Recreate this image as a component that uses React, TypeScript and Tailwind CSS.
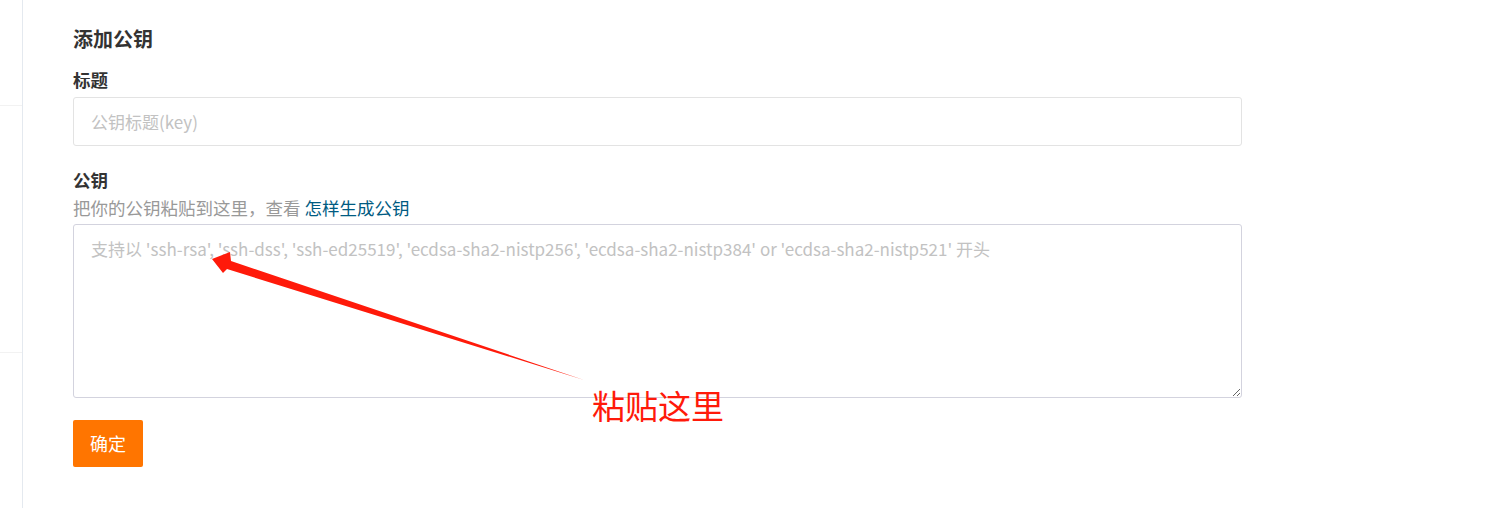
const FONT = "font-['Microsoft_YaHei','Noto_Sans_CJK_SC','Liberation_Sans',sans-serif]";

function Arrow() {
  return (
    <svg
      className="pointer-events-none absolute left-0 top-0"
      width="1502"
      height="508"
      viewBox="0 0 1502 508"
    >
      <polygon
        points="212,259 230,252 231,261 584,380 227,269 223,273"
        fill="#ff1a0a"
      />
    </svg>
  );
}

export default function App() {
  return (
    <div className={`relative flex h-[508px] w-[1502px] bg-white ${FONT}`}>
      <aside className="flex w-[23px] shrink-0 flex-col border-r border-[#e4e9ef]">
        <div className="h-[106px] border-b border-[#f2f2f2]" />
        <div className="h-[247px] border-b border-[#f2f2f2]" />
      </aside>

      <main className="flex flex-1 flex-col pl-[50px] pt-[25px] text-[#333]">
        <h2 className="text-[20px] font-bold leading-[28px]">添加公钥</h2>

        <label className="mt-[15px] text-[17.5px] font-bold leading-[24px]">标题</label>
        <input
          className="mt-[5px] h-[49px] w-[1169px] rounded-[3px] border border-[#e3e3e3] px-[17px] text-[17px] outline-none placeholder:text-[#c2c2c2]"
          placeholder="公钥标题(key)"
        />

        <label className="mt-[22px] text-[17.5px] font-bold leading-[24px]">公钥</label>
        <p className="mt-[4px] text-[17.5px] leading-[24px] text-[#999]">
          把你的公钥粘贴到这里，查看 <a className="text-[#005b82]">怎样生成公钥</a>
        </p>
        <textarea
          className="mt-[4px] h-[174px] w-[1169px] resize-y rounded-[3px] border border-[#d3d3de] px-[17px] py-[12px] text-[17px] leading-[24px] outline-none placeholder:text-[#c2c2c2]"
          placeholder="支持以 'ssh-rsa', 'ssh-dss', 'ssh-ed25519', 'ecdsa-sha2-nistp256', 'ecdsa-sha2-nistp384' or 'ecdsa-sha2-nistp521' 开头"
        />

        <div className="mt-[22px]">
          <button className="h-[47px] w-[70px] rounded-[2px] bg-[#ff7500] text-[18px] text-white">
            确定
          </button>
        </div>
      </main>

      <Arrow />
      <span className="absolute left-[592px] top-[383px] text-[33px] leading-[44px] text-[#ff1a0a]">
        粘贴这里
      </span>
    </div>
  );
}
